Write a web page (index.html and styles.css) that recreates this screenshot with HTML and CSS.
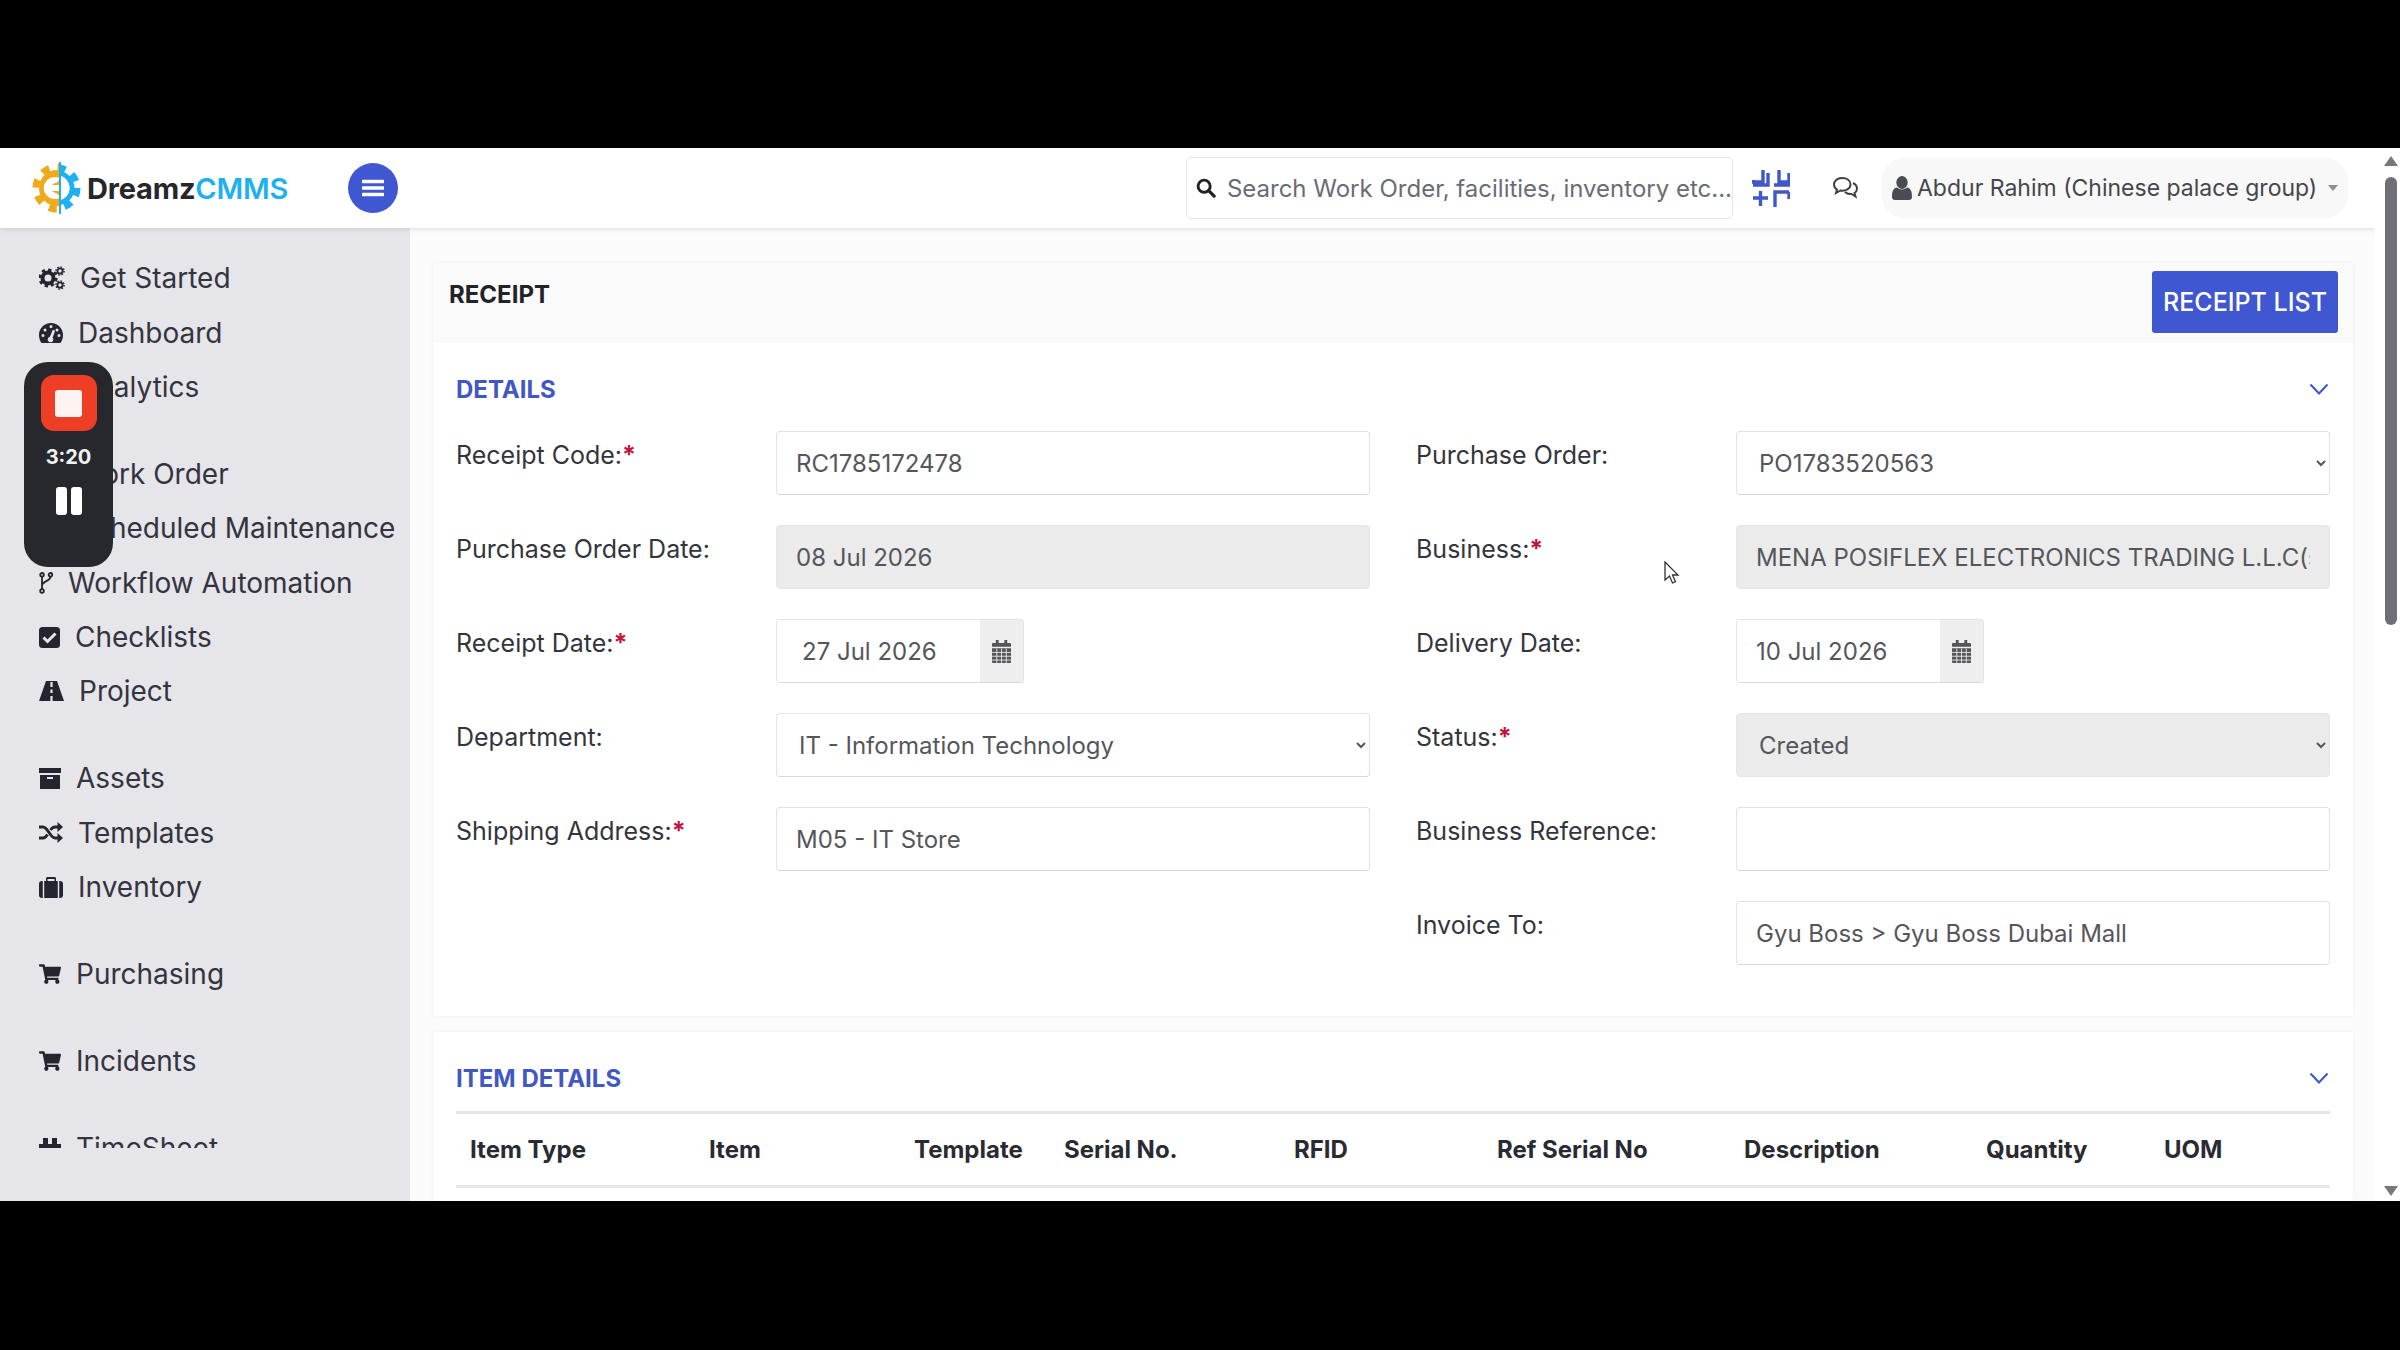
FILE: index.html
```html
<!DOCTYPE html>
<html lang="en">
<head>
<meta charset="utf-8">
<title>Receipt - DreamzCMMS</title>
<link rel="stylesheet" href="styles.css">
</head>
<body>
<svg class="defs" width="0" height="0" aria-hidden="true">
  <symbol id="cart" viewBox="0 0 576 512"><path fill="currentColor" d="M528.12 301.319l47.273-208C578.806 78.301 567.391 64 551.99 64H159.208l-9.166-44.81C147.758 8.021 137.93 0 126.529 0H24C10.745 0 0 10.745 0 24v16c0 13.255 10.745 24 24 24h69.883l70.248 343.435C147.325 417.1 136 435.222 136 456c0 30.928 25.072 56 56 56s56-25.072 56-56c0-15.674-6.447-29.835-16.824-40h209.647C430.447 426.165 424 440.326 424 456c0 30.928 25.072 56 56 56s56-25.072 56-56c0-22.172-12.888-41.332-31.579-50.405l5.517-24.276c3.413-15.018-8.002-29.319-23.403-29.319H218.117l-6.545-32h293.145c11.206 0 20.92-7.754 23.403-18.681z"/></symbol>
  <symbol id="cal" viewBox="0 0 20 24"><path fill="currentColor" d="M4 0h3v3h6V0h3v3h3a1 1 0 0 1 1 1v3H0V4a1 1 0 0 1 1-1h3zM0 8.500h20V23a1 1 0 0 1-1 1H1a1 1 0 0 1-1-1z"/><path stroke="#eee" stroke-width=".9" d="M5 9v15M10 9v15M15 9v15M0 13h20M0 17h20M0 21h20"/></symbol>
  <symbol id="chev" viewBox="0 0 20 12"><path fill="none" stroke="currentColor" stroke-width="2" d="M1.500 1.500 10 10.500l8.500-9"/></symbol>
</svg>

<div class="band"></div>
<div class="app">
  <div class="content">
    <header class="topbar">
      <div class="brand">
        <svg class="logo" width="54" height="54" viewBox="-27 -27 54 54">
          <defs>
            <clipPath id="lh"><rect x="-27" y="-27" width="29" height="54"/></clipPath>
            <clipPath id="rh"><rect x="4" y="-27" width="24" height="54"/></clipPath>
          </defs>
          <g clip-path="url(#lh)">
            <circle r="18" fill="#efaa1c"/>
            <circle r="21" fill="none" stroke="#efaa1c" stroke-width="7" stroke-dasharray="8 8.500"/>
            <path d="M-7-9a11 11 0 1 1 0 18l5-4a5 5 0 1 0 0-10z" fill="#fff" transform="rotate(180 0 0) translate(3 0)"/>
            <path d="M-9-3h12v6H-9z" fill="#fff"/>
          </g>
          <g clip-path="url(#rh)">
            <circle r="15" fill="none" stroke="#1fb0f2" stroke-width="5"/>
            <circle r="20" fill="none" stroke="#1fb0f2" stroke-width="7" stroke-dasharray="8 7.700"/>
            <circle r="12.500" fill="#fff"/>
          </g>
          <path d="M3-26v52" stroke="#1fb0f2" stroke-width="2"/>
        </svg>
        <span class="brand-name">Dreamz<span class="brand-accent">CMMS</span></span>
      </div>
      <button class="menu-btn" aria-label="Menu">
        <svg width="22" height="18" viewBox="0 0 22 18"><path d="M1 2.500h20M1 9h20M1 15.500h20" stroke="#fff" stroke-width="3.500" stroke-linecap="round"/></svg>
      </button>
      <div class="search">
        <svg class="search-icon" width="22" height="22" viewBox="0 0 22 22"><circle cx="9" cy="9" r="6.700" fill="none" stroke="#20222b" stroke-width="3.200"/><path d="m14 14 6 6" stroke="#20222b" stroke-width="3.600" stroke-linecap="round"/></svg>
        <span class="search-text">Search Work Order, facilities, inventory etc...</span>
      </div>
      <svg class="compress" width="38" height="40" viewBox="0 0 38 40" fill="none" stroke="#3f57c8" stroke-width="3.400">
        <path d="M11 2v12H1.500v-2M1 17h15V5M27 2v12h9.500v-2M22 17h15V5"/>
        <path d="M1 30h15M8.500 23v15"/>
        <path d="M37 24H23v15M37 24v7"/>
      </svg>
      <svg class="chat" width="26" height="24" viewBox="0 0 26 24" fill="none" stroke="#3d4048" stroke-width="2">
        <path d="M10 2C5 2 2 5 2 8.500c0 2.200 1 3.800 3 5l-1 3.500 4.500-2.500c5 .8 10-2 10-6S15 2 10 2z"/>
        <path d="M21 7c2.500 1.200 4 3 4 5.500 0 2-1 3.500-2.500 4.500l1 3.500-4-2.500c-2.500.4-5-.5-6.500-2"/>
      </svg>
      <div class="user">
        <svg class="user-icon" width="20" height="24" viewBox="0 0 20 24"><ellipse cx="10" cy="6.500" rx="5.700" ry="6.500" fill="#4a4c53"/><path d="M0 21c0-6 1.500-9 5-9.500 1.500 1.300 3 2 5 2s3.500-.7 5-2c3.500.5 5 3.500 5 9.500 0 2-1.300 3-3 3H3c-1.700 0-3-1-3-3z" fill="#4a4c53"/></svg>
        <span class="user-name">Abdur Rahim (Chinese palace group)</span>
        <span class="caret"></span>
      </div>
    </header>

    <div class="body">
      <aside class="sidebar">
        <nav class="nav">
          <ul class="nav-group">
            <li class="nav-item">
              <svg class="ic" width="26" height="24" viewBox="0 0 26 24">
                <circle cx="9" cy="12" r="5.500" fill="none" stroke="currentColor" stroke-width="4"/>
                <circle cx="9" cy="12" r="8.300" fill="none" stroke="currentColor" stroke-width="2.600" stroke-dasharray="3.300 3.200"/>
                <circle cx="21" cy="5" r="2.600" fill="none" stroke="currentColor" stroke-width="1.800"/>
                <circle cx="21" cy="5" r="4.100" fill="none" stroke="currentColor" stroke-width="1.400" stroke-dasharray="1.600 1.600"/>
                <circle cx="21" cy="19" r="2.600" fill="none" stroke="currentColor" stroke-width="1.800"/>
                <circle cx="21" cy="19" r="4.100" fill="none" stroke="currentColor" stroke-width="1.400" stroke-dasharray="1.600 1.600"/>
              </svg>
              <span>Get Started</span>
            </li>
            <li class="nav-item">
              <svg class="ic" width="24" height="20" viewBox="0 0 24 20">
                <path fill="currentColor" fill-rule="evenodd" d="M12 0C5.400 0 0 5.400 0 12c0 2.800.8 5.500 2.200 7.500.3.400.6.500 1 .5h17.600c.4 0 .7-.1 1-.5C23.200 17.500 24 14.800 24 12 24 5.400 18.600 0 12 0zm-1.500 3.500a1.500 1.500 0 1 0 3 0 1.500 1.500 0 1 0-3 0zM4.500 7a1.500 1.500 0 1 0 3 0 1.500 1.500 0 1 0-3 0zm12 0a1.500 1.500 0 1 0 3 0 1.500 1.500 0 1 0-3 0zM2.500 12.500a1.500 1.500 0 1 0 3 0 1.500 1.500 0 1 0-3 0zm16 0a1.500 1.500 0 1 0 3 0 1.500 1.500 0 1 0-3 0zM13.800 6.800l-2.900 7a2.800 2.800 0 1 0 2.700.9l2.500-7z"/>
              </svg>
              <span>Dashboard</span>
            </li>
            <li class="nav-item">
              <svg class="ic" width="24" height="22" viewBox="0 0 24 22"><path fill="currentColor" d="M0 0h3v19h21v3H0zM6 10h4v7H6zM12 4h4v13h-4zM18 8h4v9h-4z"/></svg>
              <span>Analytics</span>
            </li>
          </ul>
          <ul class="nav-group">
            <li class="nav-item">
              <svg class="ic" width="22" height="22" viewBox="0 0 22 22"><path fill="currentColor" d="M0 0h22v22H0z"/></svg>
              <span>Work Order</span>
            </li>
            <li class="nav-item">
              <svg class="ic" width="22" height="22" viewBox="0 0 22 22"><path fill="currentColor" d="M0 3h22v19H0z"/></svg>
              <span>Scheduled Maintenance</span>
            </li>
            <li class="nav-item">
              <svg class="ic" width="14" height="22" viewBox="0 0 14 22" fill="none" stroke="currentColor" stroke-width="1.800">
                <circle cx="3" cy="2.800" r="1.800"/><circle cx="3" cy="19" r="1.800"/><circle cx="11.500" cy="2.800" r="1.800"/>
                <path d="M3 4.800v12.300M11.500 4.800c0 4.700-8.500 4-8.500 9"/>
              </svg>
              <span>Workflow Automation</span>
            </li>
            <li class="nav-item">
              <svg class="ic" width="21" height="21" viewBox="0 0 21 21"><rect width="21" height="21" rx="3.500" fill="currentColor"/><path d="m4.500 10.500 4 4 8-8" fill="none" stroke="#e6e5ea" stroke-width="3"/></svg>
              <span>Checklists</span>
            </li>
            <li class="nav-item">
              <svg class="ic" width="25" height="20" viewBox="0 0 25 20"><path fill="currentColor" d="M7 0h11l7 20H0z"/><path stroke="#e6e5ea" stroke-width="2.200" d="M12.500 1v5M12.500 8.500V12M12.500 15v5"/></svg>
              <span>Project</span>
            </li>
          </ul>
          <ul class="nav-group">
            <li class="nav-item">
              <svg class="ic" width="22" height="21" viewBox="0 0 22 21"><path fill="currentColor" d="M0 0h22v5H0zM1 7h20v14H1z"/><path stroke="#e6e5ea" stroke-width="2" d="M8 10h6"/></svg>
              <span>Assets</span>
            </li>
            <li class="nav-item">
              <svg class="ic" width="24" height="21" viewBox="0 0 24 21" fill="none" stroke="currentColor" stroke-width="2.800">
                <path d="M0 5h4c5 0 7 11 12 11h3M0 16h4c2 0 3.300-1.500 4.500-3.500M11.500 8c1.200-1.700 2.500-3 4.500-3h3"/>
                <path fill="currentColor" stroke="none" d="m18.500 0 5.500 5-5.500 5zM18.500 11l5.500 5-5.500 5z"/>
              </svg>
              <span>Templates</span>
            </li>
            <li class="nav-item">
              <svg class="ic" width="24" height="21" viewBox="0 0 24 21"><path fill="currentColor" d="M8 0h8l1 1v3h4a3 3 0 0 1 3 3v11a3 3 0 0 1-3 3H3a3 3 0 0 1-3-3V7a3 3 0 0 1 3-3h4V1zm.500 2v2h7V2z"/><path stroke="#e6e5ea" stroke-width="1.400" d="M4.500 4v17M19.500 4v17"/></svg>
              <span>Inventory</span>
            </li>
          </ul>
          <ul class="nav-group">
            <li class="nav-item">
              <svg class="ic" width="22" height="20"><use href="#cart"/></svg>
              <span>Purchasing</span>
            </li>
          </ul>
          <ul class="nav-group">
            <li class="nav-item">
              <svg class="ic" width="22" height="20"><use href="#cart"/></svg>
              <span>Incidents</span>
            </li>
          </ul>
          <ul class="nav-group">
            <li class="nav-item">
              <svg class="ic" width="22" height="20" viewBox="0 0 22 20"><path fill="currentColor" d="M0 6h22v14H0zM4 0h5v6H4zM13 0h5v6h-5z"/></svg>
              <span>TimeSheet</span>
            </li>
          </ul>
        </nav>
      </aside>

      <main class="main">
        <section class="card card-top">
          <div class="card-head">
            <h1 class="page-title">RECEIPT</h1>
            <button class="btn-primary">RECEIPT LIST</button>
          </div>
          <div class="section">
            <div class="section-head">
              <h2 class="section-title">DETAILS</h2>
              <svg class="collapse" width="20" height="12"><use href="#chev"/></svg>
            </div>
            <div class="form-grid">
              <div class="field">
                <label class="lbl">Receipt Code:<b class="req">*</b></label>
                <input class="ctl" value="RC1785172478">
              </div>
              <div class="field">
                <label class="lbl">Purchase Order:</label>
                <select class="ctl sel"><option>PO1783520563</option></select>
              </div>
              <div class="field">
                <label class="lbl">Purchase Order Date:</label>
                <input class="ctl ro" value="08 Jul 2026" readonly>
              </div>
              <div class="field">
                <label class="lbl">Business:<b class="req">*</b></label>
                <input class="ctl ro" value="MENA POSIFLEX ELECTRONICS TRADING L.L.C(shobith(" readonly>
              </div>
              <div class="field">
                <label class="lbl">Receipt Date:<b class="req">*</b></label>
                <div class="date-group">
                  <input class="date-in date-in-wide" value="27 Jul 2026">
                  <span class="addon"><svg width="19" height="23"><use href="#cal"/></svg></span>
                </div>
              </div>
              <div class="field">
                <label class="lbl">Delivery Date:</label>
                <div class="date-group">
                  <input class="date-in" value="10 Jul 2026">
                  <span class="addon"><svg width="19" height="23"><use href="#cal"/></svg></span>
                </div>
              </div>
              <div class="field">
                <label class="lbl">Department:</label>
                <select class="ctl sel"><option>IT - Information Technology</option></select>
              </div>
              <div class="field">
                <label class="lbl">Status:<b class="req">*</b></label>
                <select class="ctl sel ro"><option>Created</option></select>
              </div>
              <div class="field">
                <label class="lbl">Shipping Address:<b class="req">*</b></label>
                <input class="ctl" value="M05 - IT Store">
              </div>
              <div class="field">
                <label class="lbl">Business Reference:</label>
                <input class="ctl">
              </div>
              <div class="field field-empty"></div>
              <div class="field">
                <label class="lbl">Invoice To:</label>
                <input class="ctl" value="Gyu Boss &gt; Gyu Boss Dubai Mall">
              </div>
            </div>
          </div>
        </section>

        <section class="card card-items">
          <div class="section-head section-head-items">
            <h2 class="section-title">ITEM DETAILS</h2>
            <svg class="collapse" width="20" height="12"><use href="#chev"/></svg>
          </div>
          <table class="items">
            <thead>
              <tr>
                <th class="c1">Item Type</th>
                <th class="c2">Item</th>
                <th class="c3">Template</th>
                <th class="c4">Serial No.</th>
                <th class="c5">RFID</th>
                <th class="c6">Ref Serial No</th>
                <th class="c7">Description</th>
                <th class="c8">Quantity</th>
                <th class="c9">UOM</th>
              </tr>
            </thead>
          </table>
        </section>
      </main>
    </div>
  </div>

  <div class="scrollbar">
    <span class="arrow-up"></span>
    <div class="track"><div class="thumb"></div></div>
    <span class="arrow-down"></span>
  </div>

  <div class="recorder">
    <div class="rec-stop"><span class="rec-square"></span></div>
    <div class="rec-time">3:20</div>
    <div class="rec-pause"><i></i><i></i></div>
  </div>

  <svg class="cursor" width="16" height="24" viewBox="0 0 16 24"><path d="M1 1v18l4.500-4 3 7 3-1.300-3-6.700H14z" fill="#fff" stroke="#333" stroke-width="1.300"/></svg>
</div>
<div class="band"></div>
</body>
</html>
```

FILE: styles.css
```css
* { box-sizing: border-box; }
html, body { margin: 0; padding: 0; }
body {
  width: 2400px;
  height: 1350px;
  overflow: hidden;
  background: #000;
  font-family: Inter, "Noto Sans", "Liberation Sans", sans-serif;
  color: #33343c;
}
.defs { position: absolute; }
.band { height: 148px; background: #000; }
.band:last-child { height: 149px; }
.app {
  position: relative;
  display: flex;
  height: 1053px;
  background: #fff;
  overflow: hidden;
}
.content { flex: 1; min-width: 0; display: flex; flex-direction: column; }

/* top bar */
.topbar {
  position: relative;
  z-index: 2;
  flex: 0 0 80px;
  display: flex;
  align-items: center;
  padding: 0 25px 0 30px;
  background: #fff;
  box-shadow: 0 1px 5px rgba(0, 0, 0, .12);
}
.brand { display: flex; align-items: center; gap: 3px; width: 318px; }
.brand-name { font-size: 29px; font-weight: 700; color: #26262b; letter-spacing: -.2px; }
.brand-accent { color: #1fb0f2; font-weight: 600; }
.menu-btn {
  flex: 0 0 50px;
  height: 50px;
  border: 0;
  padding: 0;
  border-radius: 50%;
  background: #3f57d0;
  display: flex;
  align-items: center;
  justify-content: center;
}
.search {
  display: flex;
  align-items: center;
  gap: 11px;
  width: 547px;
  height: 62px;
  margin-left: 788px;
  padding-left: 9px;
  border: 1px solid #e6e6ea;
  border-radius: 5px;
}
.search-text { font-size: 24px; color: #6b6c73; white-space: nowrap; }
.compress { margin-left: 19px; }
.chat { margin-left: 42px; }
.user {
  display: flex;
  align-items: center;
  height: 60px;
  margin-left: 24px;
  padding: 0 10px 0 10px;
  border-radius: 22px;
  background: #f8f8f8;
  gap: 5px;
}
.user-name { font-size: 23px; color: #45464d; white-space: nowrap; }
.caret {
  margin-left: 6px;
  border: 5px solid transparent;
  border-top: 6px solid #8d8e94;
  border-bottom: 0;
}

/* sidebar */
.body { flex: 1; min-height: 0; display: flex; }
.sidebar { flex: 0 0 410px; background: #e6e5ea; }
.nav {
  height: 920px;
  overflow: hidden;
  padding: 23px 0 0 39px;
  display: flex;
  flex-direction: column;
  gap: 32.500px;
}
.nav-group { list-style: none; margin: 0; padding: 0; }
.nav-item {
  display: flex;
  align-items: center;
  gap: 15px;
  height: 54.400px;
  font-size: 28px;
  color: #33343f;
  white-space: nowrap;
}
.ic { flex: none; color: #24252e; }

/* main */
.main {
  flex: 1;
  min-width: 0;
  padding: 35px 22px 0 23px;
  background: #fbfbfb;
  display: flex;
  flex-direction: column;
  gap: 16px;
  overflow: hidden;
}
.card { background: #fff; box-shadow: 0 0 4px rgba(0, 0, 0, .05); }
.card-top { flex: 0 0 753px; }
.card-items { flex: 1; background: #fff; }
.card-head {
  height: 80px;
  padding: 8px 15px 0 16px;
  background: #fafafa;
  display: flex;
  justify-content: space-between;
  align-items: flex-start;
}
.page-title { margin: 9px 0 0; font-size: 24px; font-weight: 700; color: #22232a; }
.btn-primary {
  width: 186px;
  height: 62px;
  border: 0;
  border-radius: 3px;
  background: #3f57d0;
  color: #fff;
  font: 500 25px Inter, "Liberation Sans", sans-serif;
  white-space: nowrap;
  padding: 0;
}
.section { padding: 27px 23px 0; }
.section-head {
  display: flex;
  align-items: center;
  justify-content: space-between;
  height: 38px;
  margin-bottom: 23px;
}
.section-head-items { height: 38px; margin: 27px 23px 14px; }
.section-title { margin: 0; font-size: 24px; font-weight: 700; color: #4257c4; }
.collapse { color: #3f57c0; margin-right: 1px; }

/* form */
.form-grid {
  display: grid;
  grid-template-columns: 914px 914px;
  column-gap: 46px;
  row-gap: 30px;
}
.field { display: flex; align-items: flex-start; height: 64px; }
.lbl {
  flex: 0 0 320px;
  font-size: 25px;
  line-height: 48px;
  color: #34353c;
  white-space: nowrap;
}
.req { color: #c4123f; font-weight: 700; }
.ctl {
  width: 594px;
  height: 64px;
  padding: 0 19px;
  border: 1px solid #e3e3e6;
  border-bottom-color: #d8d8dc;
  border-radius: 4px;
  background: #fff;
  font: 400 24px Inter, "Liberation Sans", sans-serif;
  color: #55565c;
}
.sel { padding-left: 18px; }
.ro { background: #ebebeb; border-color: #e6e6e6; }
.date-group {
  display: flex;
  width: 248px;
  height: 64px;
  border: 1px solid #e3e3e6;
  border-bottom-color: #d8d8dc;
  border-radius: 4px;
  overflow: hidden;
}
.date-in {
  flex: 1;
  min-width: 0;
  padding: 0 19px;
  border: 0;
  background: #fff;
  font: 400 24px Inter, "Liberation Sans", sans-serif;
  color: #55565c;
}
.date-in-wide { padding-left: 25px; }
.addon {
  flex: 0 0 43px;
  display: flex;
  align-items: center;
  justify-content: center;
  background: #eeeeee;
  color: #55565c;
}

/* table */
.items {
  width: 1874px;
  margin-left: 23px;
  border-collapse: collapse;
  table-layout: fixed;
  border-top: 3px solid #e6e6e6;
  border-bottom: 3px solid #e6e6e6;
}
.items th {
  height: 74px;
  padding: 0 0 0 14px;
  text-align: left;
  font-size: 24px;
  font-weight: 700;
  color: #2a2b32;
  white-space: nowrap;
}
.c1 { width: 239px; }
.c2 { width: 205px; }
.c3 { width: 150px; }
.c4 { width: 230px; }
.c5 { width: 203px; }
.c6 { width: 247px; }
.c7 { width: 242px; }
.c8 { width: 178px; }
.c9 { width: 180px; }

/* scrollbar */
.scrollbar {
  flex: 0 0 25px;
  position: relative;
  z-index: 3;
  background: #fff;
  display: flex;
  flex-direction: column;
  align-items: center;
  padding: 8px 0 0 6px;
}
.arrow-up { border: 7px solid transparent; border-bottom: 10px solid #77787d; border-top: 0; }
.arrow-down { border: 7px solid transparent; border-top: 10px solid #77787d; border-bottom: 0; margin-bottom: 5px; }
.track { flex: 1; width: 100%; padding-top: 11px; display: flex; justify-content: center; }
.thumb { width: 12px; height: 448px; border-radius: 6px; background: #6f7075; }

/* overlays */
.recorder {
  position: absolute;
  left: 24px;
  top: 214px;
  z-index: 4;
  width: 89px;
  height: 205px;
  padding-top: 13px;
  border-radius: 24px;
  background: #27282d;
  display: flex;
  flex-direction: column;
  align-items: center;
}
.rec-stop {
  width: 56px;
  height: 56px;
  border-radius: 13px;
  background: #ee3f26;
  display: flex;
  align-items: center;
  justify-content: center;
}
.rec-square { width: 27px; height: 27px; border-radius: 3px; background: #fdf4f1; }
.rec-time { margin-top: 14px; font-size: 20px; line-height: 24px; font-weight: 700; color: #f3f3f3; }
.rec-pause { margin-top: 18px; display: flex; gap: 4px; }
.rec-pause i { display: block; width: 11px; height: 28px; border-radius: 3px; background: #fff; }
.cursor { position: absolute; left: 1664px; top: 413px; z-index: 4; }
```
